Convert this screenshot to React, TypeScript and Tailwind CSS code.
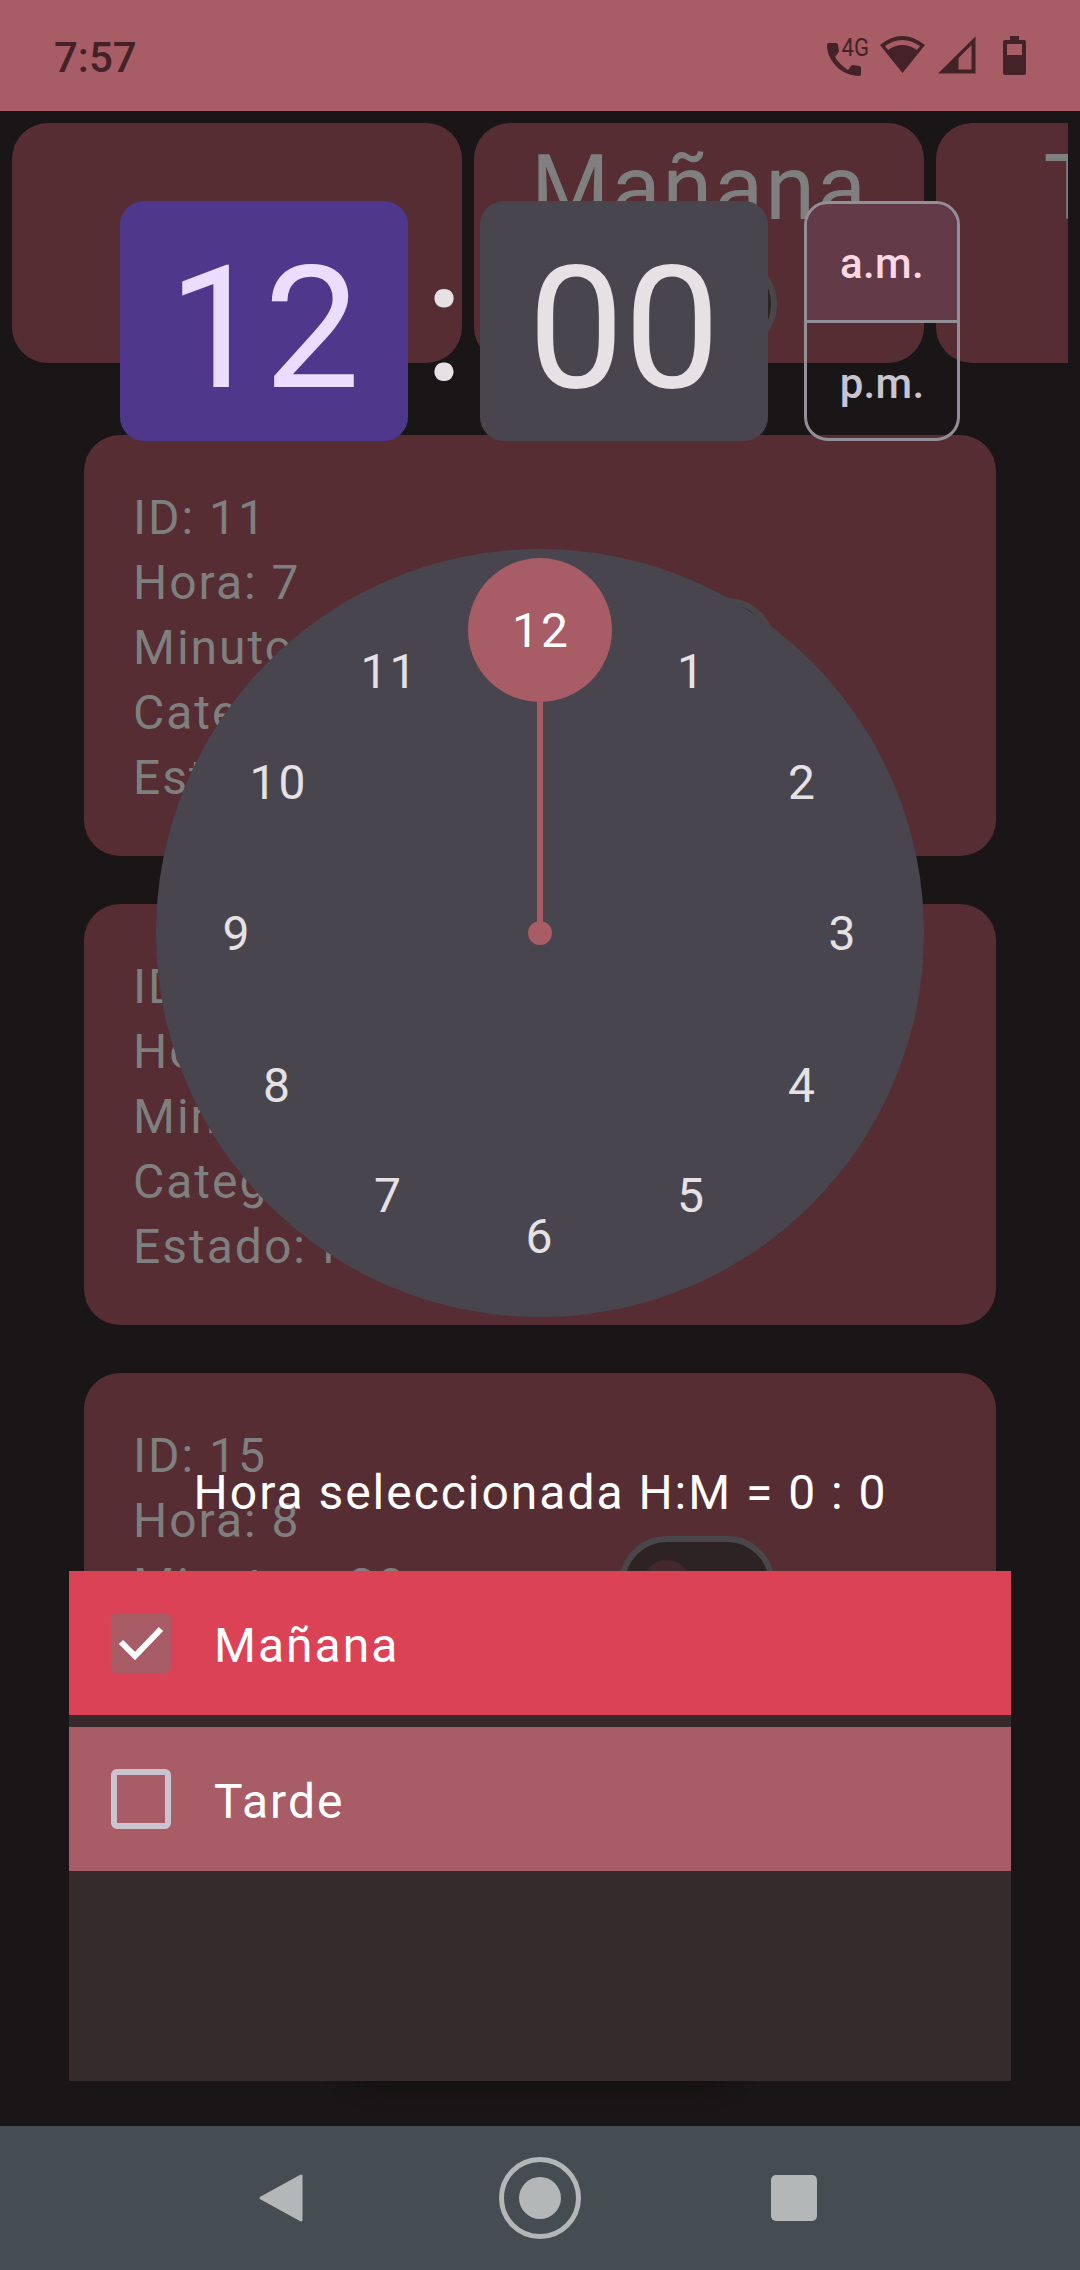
import type { ReactNode } from "react";

function Switch() {
  return (
    <div className="flex h-24 w-[156px] shrink-0 items-center rounded-full border-6 border-[#49474a] bg-[#2d2325] pl-[18px]">
      <div className="size-12 rounded-full bg-[#45282d]" />
    </div>
  );
}

function CategoryCard({ title }: { title?: string }) {
  return (
    <div className="flex h-60 w-[450px] shrink-0 flex-col items-center overflow-hidden rounded-[36px] bg-[#552d33]">
      {title && (
        <>
          <div className="mt-[13px] h-[120px] pl-px text-[90px] leading-[106px] tracking-[2px] text-[#7f7f7f]">{title}</div>
          <Switch />
        </>
      )}
    </div>
  );
}

function AlarmCard({ lines }: { lines: string[] }) {
  return (
    <div className="flex h-[421px] shrink-0 items-center rounded-[36px] bg-[#552d33] pl-[49px]">
      <div className="w-[486px] pt-[3px] text-[48px] leading-[65px] tracking-[2px] text-[#7f7f7f]">
        {lines.map((l) => (
          <div key={l}>{l}</div>
        ))}
      </div>
      <Switch />
    </div>
  );
}

function StatusBar() {
  return (
    <div className="flex h-[111px] shrink-0 items-center justify-between bg-[#a85c65] text-[#432328]">
      <div className="ml-[54px] mt-1 text-[42px] font-medium leading-none">7:57</div>
      <svg className="mr-[40px] h-[111px] w-[220px]" viewBox="820 0 220 111" fill="currentColor">
        <path d="M827 45 Q827 43 829 43 L836 43 Q838 43 838 45 L839 51 Q839 52 838 53 L835 57 Q839 64 848 70 L851 66 Q852 65 853 65 L859 66 Q861 66 861 68 L861 74 Q861 76 859 76 C843 76 827 62 827 45 Z" />
        <text x="841.5" y="55.5" fontSize="26.5" textLength="27.5" lengthAdjust="spacingAndGlyphs">4G</text>
        <path fillRule="evenodd" d="M880 45 Q902 27 925 45 L902.500 73 Z M885 46 L888 50 Q902 40 917 50 L920 46 Q902 34 885 46 Z" />
        <path fillRule="evenodd" d="M938 73.500 L975.500 36.500 V73.500 Z M958.500 58 V69.500 H971.500 V45 Z" />
        <path fillRule="evenodd" d="M1010 36 h9 v4 h5 q2 0 2 2 v31 q0 2 -2 2 h-19 q-2 0 -2 -2 v-31 q0 -2 2 -2 h5 Z M1007 44 v11 h15 v-11 Z" />
      </svg>
    </div>
  );
}

function TimeInput() {
  return (
    <div className="flex h-60 shrink-0 text-[171px]">
      <div className="w-72 rounded-3xl bg-[#4f378b] text-center leading-[256px] text-[#eaddff]">12</div>
      <div className="w-[72px] text-center leading-[241px] text-[#e6e1e5]">:</div>
      <div className="w-72 rounded-3xl bg-[#49454f] text-center leading-[256px] text-[#e6e1e5]">00</div>
      <div className="ml-9 flex w-39 flex-col overflow-hidden rounded-3xl border-3 border-[#938f99] text-[42px] font-medium tracking-[0.3px]">
        <div className="h-[119px] border-b-3 border-[#938f99] bg-[#633b48] text-center leading-[120px] text-[#ffd8e4]">a.m.</div>
        <div className="text-center leading-[122px] text-[#cac4d0]">p.m.</div>
      </div>
    </div>
  );
}

const hours = [12, 1, 2, 3, 4, 5, 6, 7, 8, 9, 10, 11];

function ClockDial() {
  return (
    <div className="relative mt-[108px] size-[768px] shrink-0 rounded-full bg-[#49454f]">
      <div className="absolute left-[381px] top-[150px] h-[234px] w-1.5 bg-[#a85c65]" />
      <div className="absolute left-[372px] top-[372px] size-6 rounded-full bg-[#a85c65]" />
      <div className="absolute left-[312px] top-[9px] size-36 rounded-full bg-[#a85c65]" />
      {hours.map((h) => {
        const a = (h * Math.PI) / 6;
        return (
          <div
            key={h}
            className={
              "absolute -mt-[35px] w-24 text-center text-[48px] leading-[72px] tracking-[2px] " +
              (h >= 10 ? "-ml-[47px] " : "-ml-12 ") +
              (h === 12 ? "text-white" : "text-[#e6e1e5]")
            }
            style={{ left: 384 + 303 * Math.sin(a), top: 384 - 303 * Math.cos(a) }}
          >
            {h}
          </div>
        );
      })}
    </div>
  );
}

function Option({ checked, children }: { checked?: boolean; children: ReactNode }) {
  return (
    <div
      className={
        "flex h-36 shrink-0 items-center pl-[42px] text-[48px] leading-[72px] tracking-[2px] text-white " +
        (checked ? "bg-[#db4256]" : "bg-[#a85c65]")
      }
    >
      {checked ? (
        <svg className="size-[60px] rounded-md bg-[#a85c65]" viewBox="0 0 60 60" fill="none" stroke="white" strokeWidth="6">
          <path d="M10 29 L24 43 L50 16" />
        </svg>
      ) : (
        <div className="size-[60px] rounded-md border-6 border-[#cac4d0]" />
      )}
      <div className="ml-[43px] pt-[5px]">{children}</div>
    </div>
  );
}

function NavBar() {
  return (
    <div className="flex h-36 shrink-0 items-center bg-[#454c52]">
      <svg className="ml-[256px] size-[50px]" viewBox="0 0 50 50">
        <path d="M45 3 V47 L5 25 Z" fill="#b3b7b8" stroke="#b3b7b8" strokeWidth="3" strokeLinejoin="round" />
      </svg>
      <div className="ml-[193px] flex size-[82px] items-center justify-center rounded-full border-[5px] border-[#b3b7b8]">
        <div className="size-[42px] rounded-full bg-[#b3b7b8]" />
      </div>
      <div className="ml-[190px] size-[46px] rounded-[5px] bg-[#b3b7b8]" />
    </div>
  );
}

export default function App() {
  return (
    <div className="relative flex h-[2270px] w-[1080px] flex-col overflow-hidden bg-[#1a1516] font-['Roboto',sans-serif]">
      <StatusBar />
      <div className="flex min-h-0 flex-1 flex-col overflow-hidden">
        <div className="mx-3 mt-3 flex shrink-0 gap-3 overflow-hidden">
          <CategoryCard />
          <CategoryCard title="Mañana" />
          <CategoryCard title="Tarde" />
        </div>
        <div className="mx-21 mt-[72px] flex flex-col gap-12">
          <AlarmCard lines={["ID: 11", "Hora: 7", "Minutos: 0", "Categoría: Mañana", "Estado: false"]} />
          <AlarmCard lines={["ID: 14", "Hora: 8", "Minutos: 0", "Categoría: Mañana", "Estado: false"]} />
          <AlarmCard lines={["ID: 15", "Hora: 8", "Minutos: 20", "Categoría: Mañana", "Estado: false"]} />
        </div>
      </div>
      <NavBar />

      {/* Time picker dialog, drawn over the dimmed alarm list */}
      <div className="absolute inset-x-0 top-[201px] flex h-[1925px] flex-col items-center overflow-hidden">
        <TimeInput />
        <ClockDial />
        <div className="mt-[140px] h-[72px] shrink-0 pl-px text-[48px] leading-[72px] tracking-[1.97px] text-white">
          Hora seleccionada H:M = 0 : 0
        </div>
        <div className="relative mt-[42px] w-[942px]">
          <div className="absolute bottom-1 left-[271px] h-24 w-[400px] rounded-[36px] bg-[#131111] shadow-[0_8px_20px_#121010]" />
          <div className="relative flex h-[510px] flex-col gap-3 bg-[#352a2c]">
            <Option checked>Mañana</Option>
            <Option>Tarde</Option>
          </div>
        </div>
      </div>
    </div>
  );
}
